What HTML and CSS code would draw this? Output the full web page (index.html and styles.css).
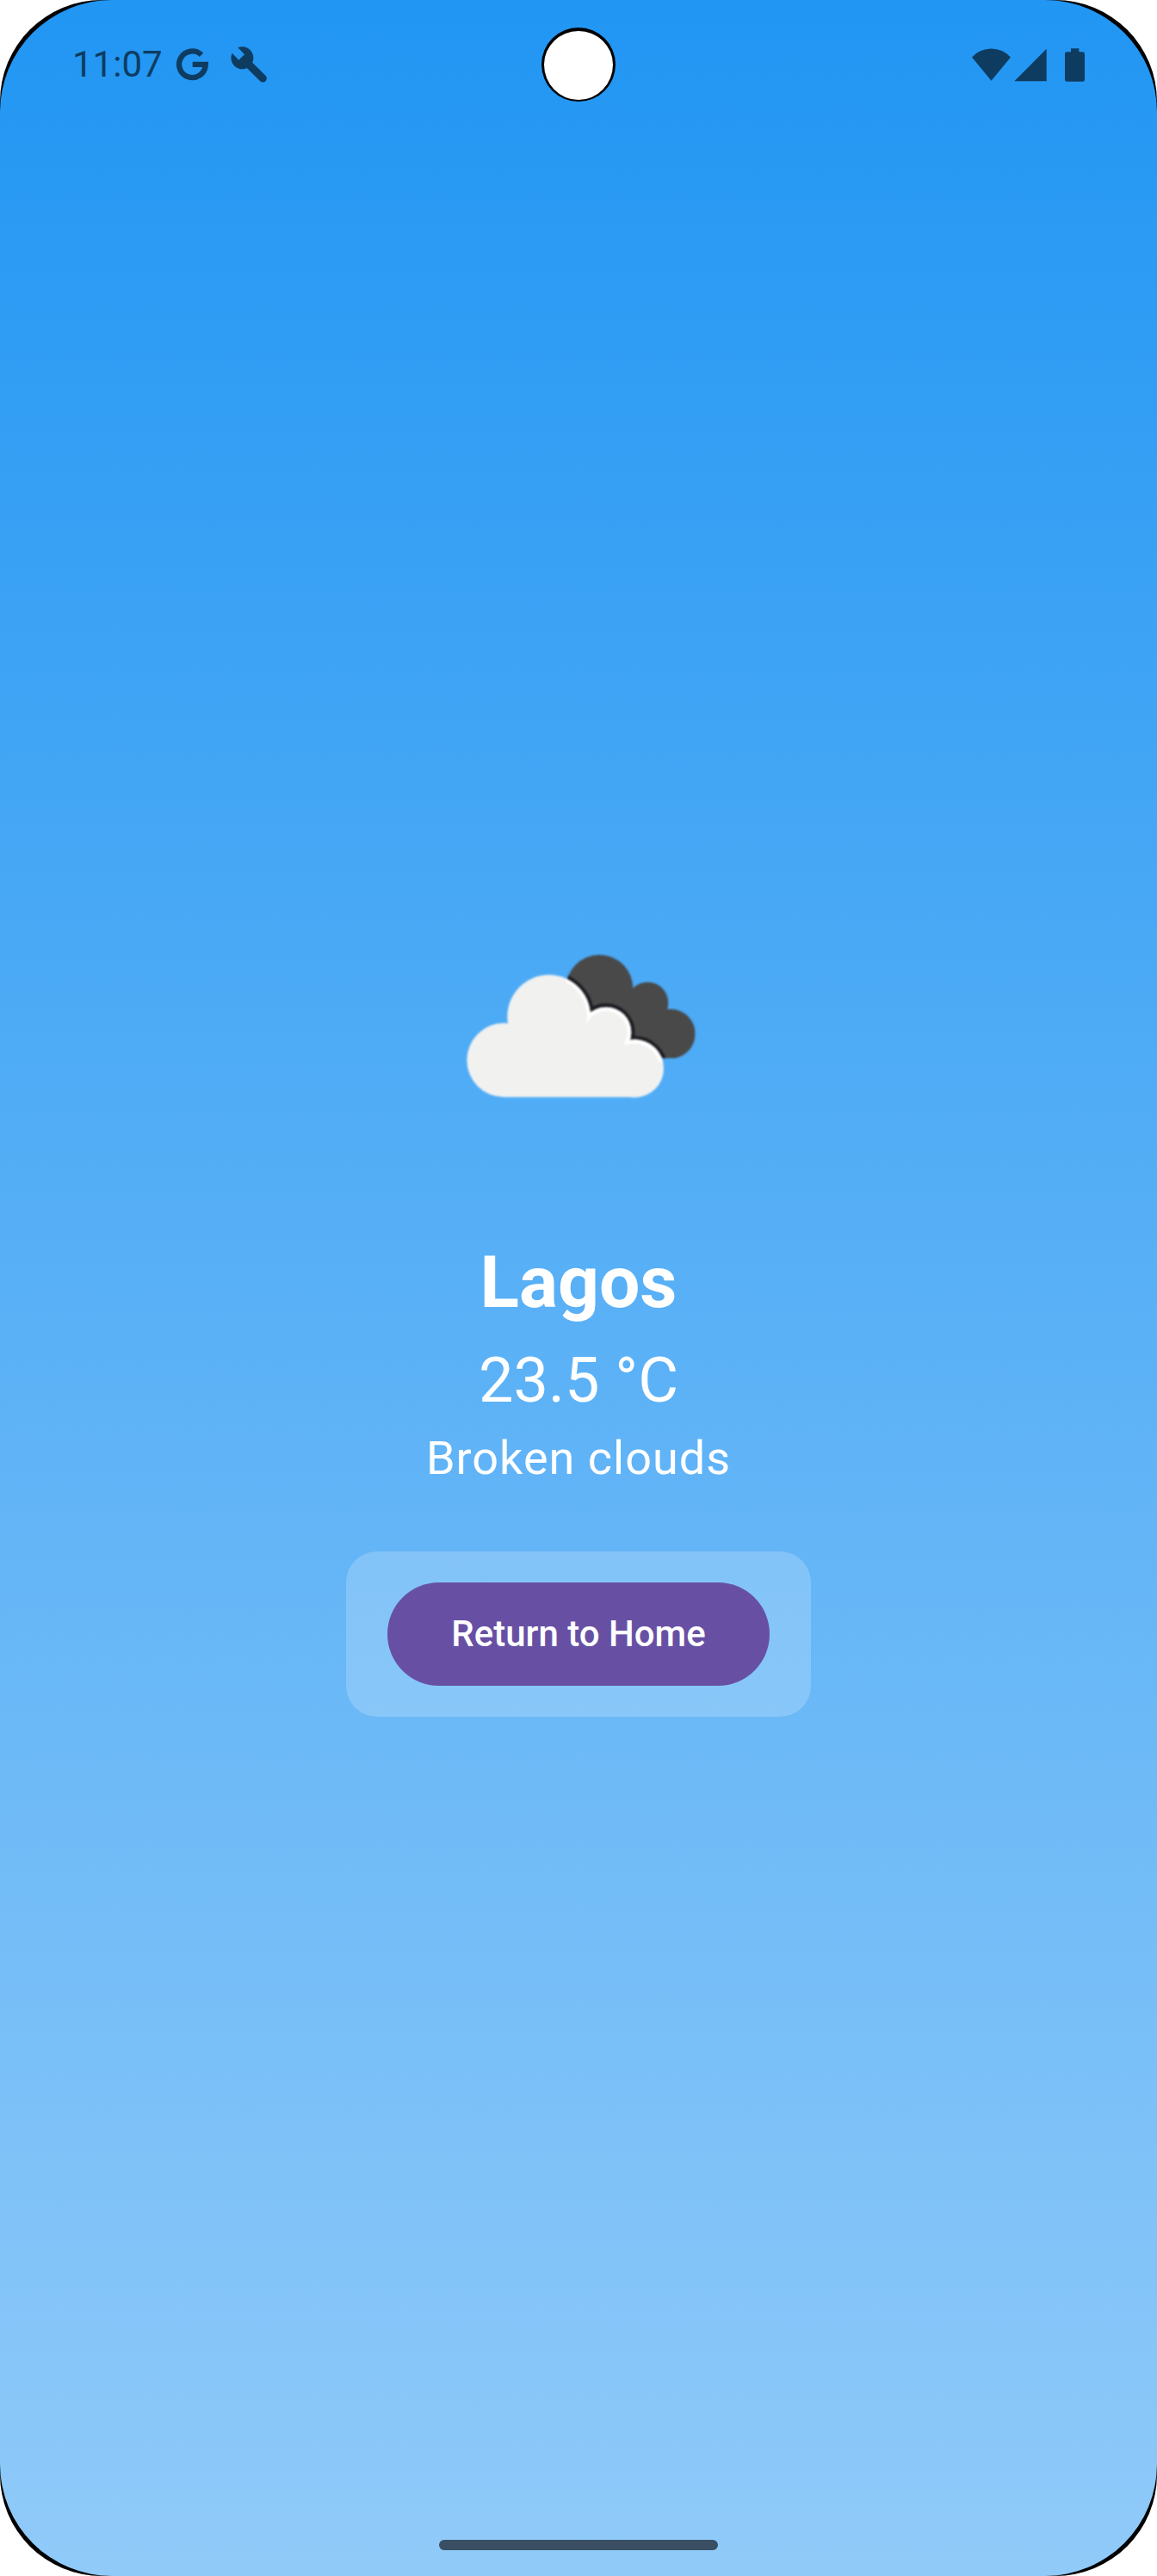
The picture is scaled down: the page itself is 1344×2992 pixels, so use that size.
FILE: index.html
```html
<!DOCTYPE html>
<html lang="en">
<head>
<meta charset="utf-8">
<meta name="viewport" content="width=device-width, initial-scale=1">
<title>Weather in Lagos</title>
<link rel="stylesheet" href="styles.css">
</head>
<body>
<div class="bezel">
  <div class="screen">
    <header class="status-bar">
      <div class="status-group">
        <time class="clock">11:07</time>
        <svg class="icon-google" viewBox="612 170 111 114" aria-hidden="true">
          <path d="M699 193A46 46 0 1 0 713 231" fill="none" stroke="currentColor" stroke-width="19"/>
          <path d="M668 217h55v14l-6 5h-49z" fill="currentColor"/>
        </svg>
        <svg class="icon-wrench" viewBox="804 164 126 126" aria-hidden="true">
          <path d="M829 168A39 39 0 1 1 809 187L832 211L852 192Z" fill="currentColor"/>
          <path d="M862 222L916 275" stroke="currentColor" stroke-width="27" stroke-linecap="round"/>
        </svg>
      </div>
      <div class="camera"></div>
      <div class="status-group">
        <svg class="icon-wifi" viewBox="147 166 135 116" aria-hidden="true">
          <path d="M147 197A91 91 0 0 1 282 197L214.500 279Z" fill="currentColor"/>
        </svg>
        <svg class="icon-signal" viewBox="293 166 114 116" aria-hidden="true">
          <path d="M294 280L406 168V280Z" fill="currentColor"/>
        </svg>
        <svg class="icon-battery" viewBox="471 166 69 116" aria-hidden="true">
          <path d="M492 166h28v12h13q7 0 7 7v90q0 7-7 7h-55q-7 0-7-7v-90q0-7 7-7h14z" fill="currentColor"/>
        </svg>
      </div>
    </header>

    <main class="weather">
      <svg class="weather-icon" viewBox="-84 -246 1080 1080" role="img" aria-label="Broken clouds">
        <defs>
          <clipPath id="dark-cloud">
            <circle cx="529" cy="204" r="117"/>
            <circle cx="697" cy="254" r="72"/>
            <circle cx="777" cy="362" r="86"/>
            <path d="M529 204L640 200L697 254L777 362V448H529z"/>
          </clipPath>
          <clipPath id="edge">
            <path d="M410 165L440 60L900 60V460H735L600 440L440 340z"/>
          </clipPath>
          <filter id="soften" x="-10%" y="-10%" width="120%" height="120%">
            <feGaussianBlur stdDeviation="3"/>
          </filter>
          <g id="cloud">
            <circle cx="196" cy="454" r="129"/>
            <circle cx="353" cy="302" r="145"/>
            <circle cx="552" cy="357" r="88"/>
            <circle cx="652" cy="483" r="101"/>
            <path d="M250 340H600V400H652V583H196V400H250z"/>
          </g>
          <g id="cloud-core">
            <circle cx="353" cy="302" r="133"/>
            <circle cx="552" cy="357" r="74"/>
            <circle cx="652" cy="483" r="87"/>
            <path d="M250 340H580V400H630V583H196V400H250z"/>
          </g>
        </defs>
        <g filter="url(#soften)">
          <g clip-path="url(#dark-cloud)">
            <path d="M380 60H900V470H380z" fill="#48484a"/>
            <use href="#cloud" fill="#1d1d20" stroke="#1d1d20" stroke-width="26"/>
          </g>
        </g>
        <g filter="url(#soften)">
          <use href="#cloud" fill="#f1f1f0"/>
          <g clip-path="url(#edge)">
            <use href="#cloud" fill="#ffffff"/>
            <use href="#cloud-core" fill="#f1f1f0"/>
          </g>
        </g>
      </svg>
      <h1 class="city">Lagos</h1>
      <p class="temperature">23.5 °C</p>
      <p class="description">Broken clouds</p>
      <div class="action-card">
        <button class="home-button" type="button">Return to Home</button>
      </div>
    </main>

    <footer class="nav-bar"><div class="nav-handle"></div></footer>
  </div>
</div>
</body>
</html>
```
FILE: styles.css
```css
* {
  box-sizing: border-box;
}

body {
  margin: 0;
  background: #fff;
  font-family: Roboto, sans-serif;
  color: #fff;
}

.bezel {
  background: #000;
  border-radius: 118px;
}

.screen {
  display: grid;
  grid-template-rows: 1fr auto 1fr;
  min-height: 100vh;
  border-radius: 130px;
  background: linear-gradient(#2196f3, #90caf9);
}

.status-bar {
  position: relative;
  align-self: start;
  display: flex;
  align-items: center;
  justify-content: space-between;
  height: 150px;
  padding: 0 84px;
  color: #0e3c61;
}

.status-group {
  display: flex;
  align-items: center;
}

.clock {
  font-size: 42px;
  line-height: 48px;
}

.icon-google {
  width: 37px;
  height: 38px;
  margin-left: 16px;
}

.icon-wrench {
  width: 42px;
  height: 42px;
  margin-left: 26px;
}

.icon-wifi {
  width: 45px;
  height: 39px;
}

.icon-signal {
  width: 38px;
  height: 39px;
  margin-left: 4px;
}

.icon-battery {
  width: 23px;
  height: 39px;
  margin-left: 21px;
}

.camera {
  position: absolute;
  top: 32px;
  left: 50%;
  width: 86px;
  height: 86px;
  margin-left: -43px;
  border: 3px solid #000;
  border-top-width: 4px;
  border-bottom-width: 2px;
  border-radius: 50%;
  background: #fff;
}

.weather {
  display: flex;
  flex-direction: column;
  align-items: center;
  text-align: center;
}

.weather-icon {
  width: 360px;
  height: 360px;
}

.city {
  margin: 84px 0 0;
  font-size: 84px;
  font-weight: 700;
  line-height: 96px;
}

.temperature {
  margin: 24px 0 0;
  font-size: 72px;
  line-height: 84px;
}

.description {
  margin: 16px 0 0;
  font-size: 54px;
  line-height: 64px;
  letter-spacing: 1px;
}

.action-card {
  margin-top: 76px;
  padding: 36px 48px;
  border-radius: 36px;
  background: rgba(255, 255, 255, 0.2);
}

.home-button {
  display: block;
  height: 120px;
  padding: 0 74px;
  border: 0;
  border-radius: 60px;
  background: #6750a4;
  color: #fff;
  font-family: inherit;
  font-size: 42px;
  font-weight: 500;
  line-height: 60px;
  cursor: pointer;
}

.nav-bar {
  align-self: end;
  display: flex;
  justify-content: center;
  padding-bottom: 30px;
}

.nav-handle {
  width: 324px;
  height: 12px;
  border-radius: 6px;
  background: #3a4f63;
}
```
